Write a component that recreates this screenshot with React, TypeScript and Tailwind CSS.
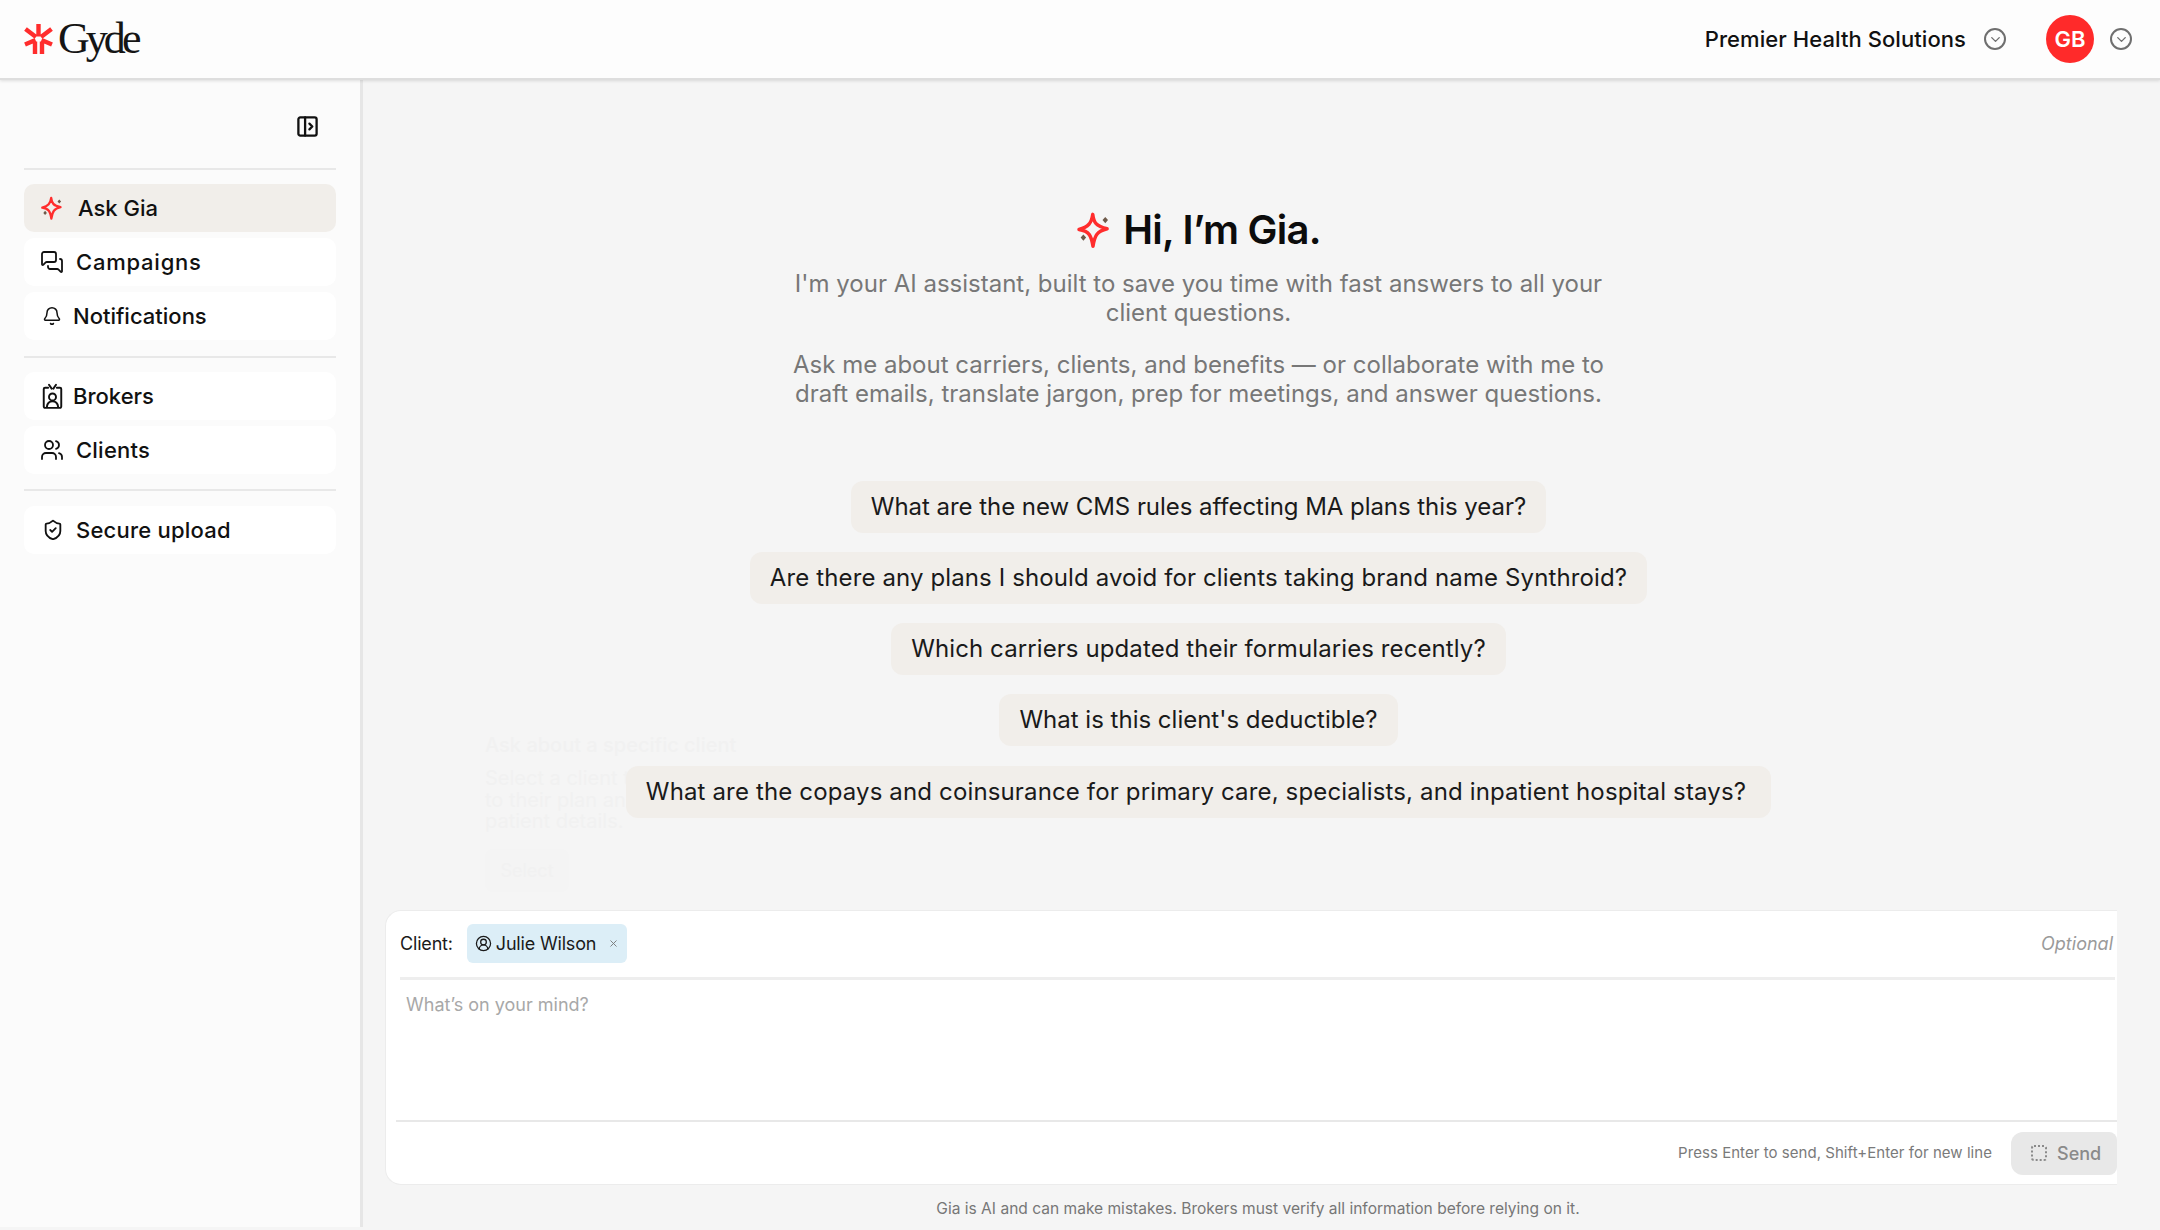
import React from "react";
import { MessagesSquare, Bell, Users, ShieldCheck, ChevronDown, CircleUserRound, X } from "lucide-react";

const font = { fontFamily: '"Inter", "Liberation Sans", sans-serif' };

function Sparkle({ className }: { className?: string }) {
  return (
    <svg viewBox="0 0 32 32" fill="none" className={className}>
      <path d="M15 3.500 C15.800 10 17.500 13 26.500 15 C18.500 17 16.600 20 15.200 29 C13.800 20 12 17 4 15.600 C11.500 13.500 14 10.500 15 3.500 Z" stroke="#ff2d2d" strokeWidth="2.800" strokeLinejoin="round" />
      <path d="M25 5.500 L27.200 8 L25 10.500 L22.800 8 Z M7.500 19.500 L9.700 22 L7.500 24.500 L5.300 22 Z" fill="#6e5a4a" />
    </svg>
  );
}

function Logo() {
  return (
    <svg viewBox="24 24 30 30" fill="none" stroke="#ff2d2d" strokeWidth="4.400" className="w-[30px] h-[30px]">
      <path d="M38.500 24V36.500M25.500 29L36 37M51.500 29L41 37M25 44.500L35.500 40M52 44.500L41.500 40M35 54V41.500M42 54V41.500" />
    </svg>
  );
}

function BadgeIcon() {
  return (
    <svg viewBox="0 0 24 30" fill="none" stroke="#111" strokeWidth="2.200" strokeLinejoin="round" strokeLinecap="round" className="w-[21px] h-[27px]">
      <path d="M7 5H3.500a1.500 1.500 0 0 0-1.500 1.500v20A1.500 1.500 0 0 0 3.500 28h17a1.500 1.500 0 0 0 1.500-1.500v-20A1.500 1.500 0 0 0 20.500 5H17" />
      <path d="M8 1.500 11 6M16 1.500 13 6" />
      <circle cx="12" cy="15.500" r="4" />
      <path d="M5.500 27c.6-4.500 3-6.500 6.500-6.500s5.900 2 6.500 6.500" />
    </svg>
  );
}

function PanelIcon() {
  return (
    <svg viewBox="0 0 24 24" fill="none" stroke="#111" strokeWidth="2.400" strokeLinecap="round" strokeLinejoin="round" className="w-[23px] h-[23px]">
      <rect x="2.500" y="2.500" width="19" height="19" rx="2" />
      <path d="M9.500 2.500v19M14 9l3 3-3 3" />
    </svg>
  );
}

function CircleChevron() {
  return (
    <span className="w-[22px] h-[22px] rounded-full border-2 border-[#6f6f6f] flex items-center justify-center">
      <ChevronDown className="w-[15px] h-[15px] text-[#6f6f6f]" strokeWidth={2.200} />
    </span>
  );
}

function NavItem({ icon, label, active, gap, track = "tracking-[0.01em]" }: { icon: React.ReactNode; label: string; active?: boolean; gap: string; track?: string }) {
  return (
    <div className={`h-[48px] rounded-[10px] flex items-center pl-[18px] text-[22px] font-medium text-[#111] ${track} ${active ? "bg-[#f1eeea]" : "bg-white"} ${gap}`}>
      {icon}
      <span>{label}</span>
    </div>
  );
}

const Pill = ({ children, track, pad = "px-[20px]" }: { children: React.ReactNode; track: string; pad?: string }) => (
  <div className={`relative z-10 h-[52px] rounded-[12px] bg-[#f1eeea] text-[24px] leading-[52px] text-[#1a1a1a] whitespace-nowrap ${pad} ${track}`}>{children}</div>
);

export default function App() {
  return (
    <div style={font} className="w-[2160px] h-[1230px] overflow-hidden flex flex-col bg-[#f5f5f5]">
      <header className="relative z-10 h-[80px] shrink-0 bg-[#fdfdfd] border-b-2 border-[#dedede] shadow-[0_1px_3px_rgba(0,0,0,0.12)] flex items-center pl-[24px] pr-[28px]">
        <Logo />
        <span style={{ fontFamily: '"Liberation Serif", serif' }} className="text-[44px] leading-none tracking-[-0.09em] text-[#151515] ml-[4px]">Gyde</span>
        <div className="ml-auto flex items-center">
          <span className="text-[22px] font-medium tracking-[0.003em] text-[#111]">Premier Health Solutions</span>
          <span className="ml-[18px]"><CircleChevron /></span>
          <span className="ml-[40px] w-[48px] h-[48px] rounded-full bg-[#ff2a2a] text-white text-[22px] font-semibold flex items-center justify-center">GB</span>
          <span className="ml-[16px]"><CircleChevron /></span>
        </div>
      </header>
      <div className="flex flex-1 min-h-0">
        <aside className="w-[363px] shrink-0 mb-[3px] bg-[#fbfbfb] border-r-[3px] border-[#e6e6e6] px-[24px]">
          <div className="h-[90px] flex items-center justify-end pr-[17px] pt-[4px] border-b-2 border-[#e8e8e8]">
            <PanelIcon />
          </div>
          <div className="flex flex-col gap-[6px] pt-[14px] pb-[16px] border-b-2 border-[#e8e8e8]">
            <NavItem active gap="gap-[13px]" label="Ask Gia" track="tracking-[0]" icon={<Sparkle className="w-[26px] h-[26px] ml-[-3px]" />} />
            <NavItem gap="gap-[12px]" label="Campaigns" track="tracking-[0.035em]" icon={<MessagesSquare className="w-[24px] h-[24px] text-[#111] ml-[-2px]" strokeWidth={1.800} />} />
            <NavItem gap="gap-[11px]" label="Notifications" track="tracking-[0]" icon={<Bell className="w-[20px] h-[20px] text-[#111]" strokeWidth={1.800} />} />
          </div>
          <div className="flex flex-col gap-[6px] pt-[14px] pb-[15px] border-b-2 border-[#e8e8e8]">
            <NavItem gap="gap-[10px]" label="Brokers" track="tracking-[0]" icon={<BadgeIcon />} />
            <NavItem gap="gap-[12px]" label="Clients" icon={<Users className="w-[24px] h-[24px] text-[#111] ml-[-2px]" strokeWidth={1.800} />} />
          </div>
          <div className="flex flex-col pt-[15px]">
            <NavItem gap="gap-[12px]" label="Secure upload" icon={<ShieldCheck className="w-[22px] h-[22px] text-[#111]" strokeWidth={2} />} />
          </div>
        </aside>
        <main className="relative flex-1 min-w-0 flex flex-col">
          <div className="flex-1 min-h-0 pr-[126px] flex flex-col items-center pt-[127px]">
            <div className="flex items-center gap-[9px] h-[46px] translate-x-[-1px]">
              <Sparkle className="w-[40px] h-[40px]" />
              <h1 className="text-[40px] font-semibold tracking-[-0.018em] text-[#0c0c0c] leading-none">Hi, I’m Gia.</h1>
            </div>
            <p className="mt-[17px] w-[830px] text-center text-[24px] leading-[28.500px] text-[#777]">I'm your AI assistant, built to save you time with fast answers to all your<br />client questions.</p>
            <p className="mt-[24px] w-[830px] text-center text-[24px] leading-[28.500px] text-[#777]">Ask me about carriers, clients, and benefits — or collaborate with me to<br />draft emails, translate jargon, prep for meetings, and answer questions.</p>
            <div className="mt-[72.500px] flex flex-col items-center gap-[19.300px]">
              <Pill track="tracking-[-0.002em]">What are the new CMS rules affecting MA plans this year?</Pill>
              <Pill track="tracking-[0.005em]">Are there any plans I should avoid for clients taking brand name Synthroid?</Pill>
              <Pill track="tracking-[0.004em]">Which carriers updated their formularies recently?</Pill>
              <Pill track="tracking-[0]">What is this client's deductible?</Pill>
              <Pill pad="pl-[20px] pr-[25px]" track="tracking-[0.006em]">What are the copays and coinsurance for primary care, specialists, and inpatient hospital stays?</Pill>
            </div>
          </div>
          <div className="absolute left-[122px] top-[650px] text-[#f1f1f1] pointer-events-none">
            <div className="text-[20px] font-medium whitespace-nowrap">Ask about a specific client</div>
            <div className="mt-[8px] text-[20px] leading-[21.500px] whitespace-nowrap">Select a client to give Gia access<br />to their plan and<br />patient details.</div>
            <div className="mt-[16px] w-[84px] h-[43px] rounded-[8px] bg-[#f4f4f4] flex items-center justify-center text-[18px]">Select</div>
          </div>
          <div className="shrink-0 pl-[22px] pr-[43px]">
            <div className="h-[275px] bg-white rounded-l-[16px] border border-r-0 border-[#ececec] overflow-hidden flex flex-col">
              <div className="h-[69px] mx-[14px] mr-[2px] pb-[2px] border-b-[3px] border-[#eeeeee] flex items-center shrink-0">
                <span className="text-[18px] tracking-[-0.01em] text-[#1a1a1a]">Client:</span>
                <div className="ml-[14px] h-[39px] w-[160px] rounded-[6px] bg-[#dceef7] flex items-center pl-[8px] text-[18px] tracking-[-0.01em] text-[#1a1a1a]">
                  <CircleUserRound className="w-[17px] h-[17px] mr-[4px]" strokeWidth={1.800} />
                  <span>Julie Wilson</span>
                  <X className="w-[11px] h-[11px] ml-auto mr-[8px] text-[#777]" strokeWidth={2} />
                </div>
                <span className="ml-auto italic text-[18px] text-[#9a9a9a] mr-[2px]">Optional</span>
              </div>
              <div className="h-[142px] mx-[10px] mr-0 border-b-2 border-[#e8e8e8] pl-[10px] pt-[11px] text-[18px] text-[#a8a8a8] shrink-0">What’s on your mind?</div>
              <div className="flex-1 flex items-center justify-end">
                <span className="text-[15px] tracking-[0.003em] text-[#7a7a7a]">Press Enter to send, Shift+Enter for new line</span>
                <div className="ml-[19px] w-[106px] h-[43px] rounded-l-[12px] rounded-r-[8px] bg-[#e8e8e8] flex items-center pl-[20px] text-[18px] font-medium text-[#8a8a8a]">
                  <span className="w-[16px] h-[16px] border-2 border-dotted border-[#8a8a8a] rounded-[3px] mr-[10px]" />
                  Send
                </div>
              </div>
            </div>
            <div className="h-[45px] pt-[3px] pl-[14px] flex items-center justify-center text-[15.550px] text-[#777]">Gia is AI and can make mistakes. Brokers must verify all information before relying on it.</div>
          </div>
        </main>
      </div>
    </div>
  );
}
